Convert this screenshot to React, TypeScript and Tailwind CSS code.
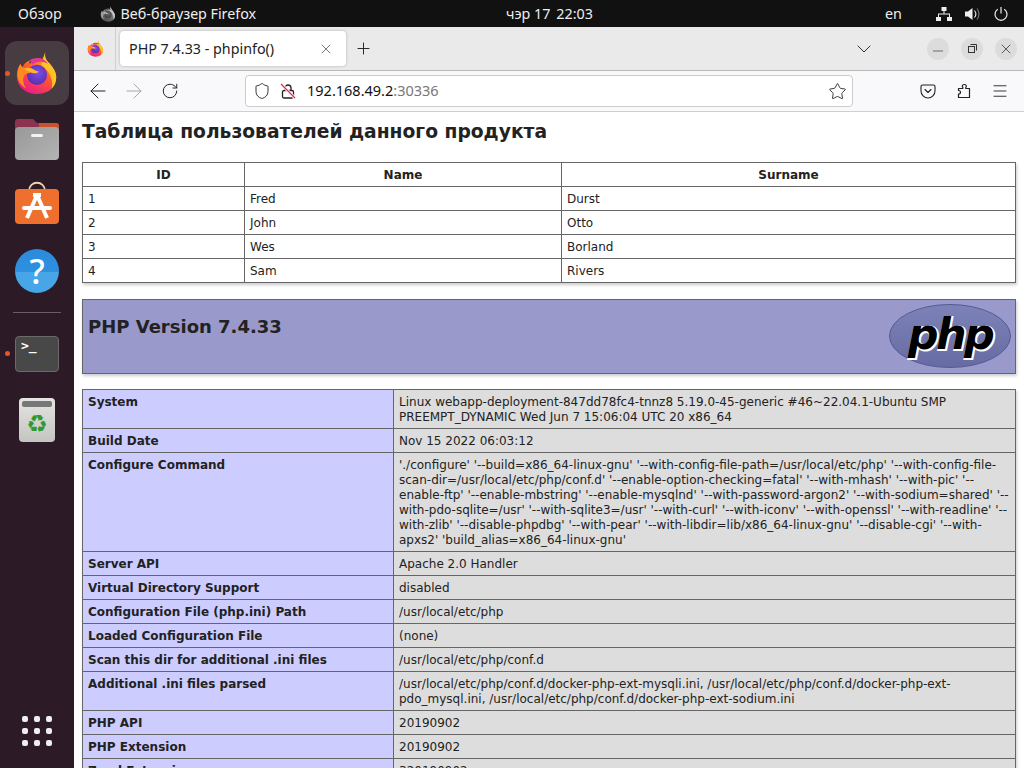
import React from "react";
import { ArrowLeft, ArrowRight, ChevronDown, Menu, Minus, Plus, RotateCw, Shield, Star, X } from "lucide-react";

const users = [
  ["1", "Fred", "Durst"],
  ["2", "John", "Otto"],
  ["3", "Wes", "Borland"],
  ["4", "Sam", "Rivers"],
];

const phpRows = [
  ["System", "Linux webapp-deployment-847dd78fc4-tnnz8 5.19.0-45-generic #46~22.04.1-Ubuntu SMP PREEMPT_DYNAMIC Wed Jun 7 15:06:04 UTC 20 x86_64"],
  ["Build Date", "Nov 15 2022 06:03:12"],
  ["Configure Command", "'./configure' '--build=x86_64-linux-gnu' '--with-config-file-path=/usr/local/etc/php' '--with-config-file-scan-dir=/usr/local/etc/php/conf.d' '--enable-option-checking=fatal' '--with-mhash' '--with-pic' '--enable-ftp' '--enable-mbstring' '--enable-mysqlnd' '--with-password-argon2' '--with-sodium=shared' '--with-pdo-sqlite=/usr' '--with-sqlite3=/usr' '--with-curl' '--with-iconv' '--with-openssl' '--with-readline' '--with-zlib' '--disable-phpdbg' '--with-pear' '--with-libdir=lib/x86_64-linux-gnu' '--disable-cgi' '--with-apxs2' 'build_alias=x86_64-linux-gnu'"],
  ["Server API", "Apache 2.0 Handler"],
  ["Virtual Directory Support", "disabled"],
  ["Configuration File (php.ini) Path", "/usr/local/etc/php"],
  ["Loaded Configuration File", "(none)"],
  ["Scan this dir for additional .ini files", "/usr/local/etc/php/conf.d"],
  ["Additional .ini files parsed", "/usr/local/etc/php/conf.d/docker-php-ext-mysqli.ini, /usr/local/etc/php/conf.d/docker-php-ext-pdo_mysql.ini, /usr/local/etc/php/conf.d/docker-php-ext-sodium.ini"],
  ["PHP API", "20190902"],
  ["PHP Extension", "20190902"],
  ["Zend Extension", "320190902"],
];

function FirefoxLogo({ size }: { size: number }) {
  return (
    <svg width={size} height={size} viewBox="0 0 48 48">
      <defs>
        <linearGradient id="ffBody" x1="0.75" y1="0.05" x2="0.25" y2="1">
          <stop offset="0" stopColor="#ffb31f" />
          <stop offset="0.45" stopColor="#ff5a2c" />
          <stop offset="1" stopColor="#e8188c" />
        </linearGradient>
        <radialGradient id="ffGlobe" cx="0.55" cy="0.4" r="0.65">
          <stop offset="0" stopColor="#7b50e0" />
          <stop offset="1" stopColor="#5a2ab0" />
        </radialGradient>
      </defs>
      <path d="M33 1c-1 6 1 9 5 13 4 5 7 9 7 15 0 11-9 18-21 18C12 47 2 39 2 27c0-6 2-10 4-13 0 3 1 4 2 5 1-5 5-8 9-9-1 1-2 3-1 4 3-3 8-4 12-3 3-3 4-7 5-10z" fill="url(#ffBody)" />
      <path d="M33 1c-1 6 1 9 5 13 4 5 7 9 7 15 0 5-2 9-5 12 1-4 1-9-2-15-2-5-6-8-10-11 3-3 4-10 5-14z" fill="#ffc327" />
      <circle cx="24" cy="26" r="11" fill="url(#ffGlobe)" />
      <path d="M6 14c-3 5-4 10-3 15 1 6 5 9 9 12-3-5-4-10-2-14 2-3 6-3 8-3-2-1-5-3-6-5-2 0-5-1-6-5z" fill="#ff8a1f" />
      <path d="M10 19c3-1 7-1 10 1 2 1 4 3 6 2-1 2-4 3-7 2-3-1-6-2-9-5z" fill="#ffb52e" />
      <path d="M16 10c3-2 8-3 12-2 3 1 6 3 8 6-3-2-7-3-10-2-3 0-5 1-7 3-1-2-2-4-3-5z" fill="#e0389b" />
    </svg>
  );
}

function NetworkIcon() {
  return (
    <svg width="16" height="14" viewBox="0 0 16 14" fill="#eeeeee">
      <rect x="5.500" y="0" width="5" height="4" />
      <rect x="0" y="10" width="5" height="4" />
      <rect x="11" y="10" width="5" height="4" />
      <path d="M7.500 4h1v2.500h5.500V10h-1V7.500H3V10H2V6.500h5.500z" />
    </svg>
  );
}

function VolumeIcon() {
  return (
    <svg width="16" height="14" viewBox="0 0 16 14" fill="none">
      <path d="M0 4.500h3L7.500 1v12L3 9.500H0z" fill="#eeeeee" />
      <path d="M9.500 3.500c1.600 2 1.600 5 0 7" stroke="#eeeeee" strokeWidth="1.100" />
      <path d="M12 1.500c2.600 3.200 2.600 7.800 0 11" stroke="#777777" strokeWidth="1.100" />
    </svg>
  );
}

function PowerIcon() {
  return (
    <svg width="14" height="14" viewBox="0 0 14 14" fill="none" stroke="#eeeeee" strokeWidth="1.200">
      <path d="M7 0v6.500" />
      <path d="M3.800 2.200a6 6 0 1 0 6.400 0" />
    </svg>
  );
}

function BrokenLock() {
  return (
    <svg width="16" height="16" viewBox="0 0 16 16" fill="none">
      <rect x="2.500" y="7.500" width="11" height="7.500" rx="1.500" stroke="#222" strokeWidth="1.300" />
      <path d="M5 7.500V5a3 3 0 0 1 6 0v2.500" stroke="#222" strokeWidth="1.300" />
      <path d="M1 1l14 14" stroke="#ffffff" strokeWidth="3" />
      <path d="M1 1l14 14" stroke="#e22850" strokeWidth="1.300" />
    </svg>
  );
}

function PocketIcon() {
  return (
    <svg width="16" height="16" viewBox="0 0 16 16" fill="none" stroke="#222" strokeWidth="1.100">
      <path d="M2.500 2h11A1.500 1.500 0 0 1 15 3.500V8a7 7 0 0 1-14 0V3.500A1.500 1.500 0 0 1 2.500 2z" />
      <path d="M5 6.500l3 3 3-3" strokeLinecap="round" strokeLinejoin="round" />
    </svg>
  );
}

function PuzzleIcon() {
  return (
    <svg width="16" height="16" viewBox="0 0 16 16" fill="none" stroke="#222" strokeWidth="1.200" strokeLinejoin="round">
      <path d="M2.500 14.500H13.500V5.500H10.200c-.5 0-.7-.5-.4-1 .3-.4.5-.8.5-1.300 0-1-1-1.700-2-1.700S6.300 2.200 6.300 3.200c0 .5.2.9.5 1.300.3.5.1 1-.4 1H2.500V7.500c.9 0 2 .5 2 1.800s-1.100 1.800-2 1.800z" />
    </svg>
  );
}

function FilesIcon() {
  return (
    <svg width="44" height="42" viewBox="0 0 44 42">
      <defs>
        <linearGradient id="filesBody" x1="0" y1="0" x2="1" y2="1">
          <stop offset="0" stopColor="#989898" />
          <stop offset="1" stopColor="#b4b4b4" />
        </linearGradient>
      </defs>
      <path d="M0 3a3 3 0 0 1 3-3h15l4 4h19a3 3 0 0 1 3 3v14H0z" fill="#8c3350" />
      <path d="M24 4h17a3 3 0 0 1 3 3v6H24z" fill="#c8532f" />
      <rect x="0" y="8" width="44" height="33" rx="4" fill="url(#filesBody)" />
      <rect x="16" y="15" width="12" height="3" rx="1.500" fill="#f2f2f2" />
    </svg>
  );
}

function StoreIcon() {
  return (
    <svg width="44" height="44" viewBox="0 0 44 44" fill="none">
      <path d="M14 11c0-11 16-11 16 0" stroke="#f1d3a8" strokeWidth="1.800" />
      <rect x="0" y="9" width="44" height="35" rx="4" fill="#ef6f2f" />
      <path d="M22 15L12 38M22 15l10 23" stroke="#ffffff" strokeWidth="4" />
      <path d="M9 28h26" stroke="#ffffff" strokeWidth="4" strokeLinecap="round" />
      <path d="M18 15h8" stroke="#ffffff" strokeWidth="4" />
    </svg>
  );
}

function HelpIcon() {
  return (
    <div className="flex h-[44px] w-[44px] items-center justify-center rounded-full bg-[linear-gradient(#2a8bdc_0%,#2f8fdf_52%,#47a6e8_52%,#47a6e8_100%)] font-['Noto_Sans',sans-serif] text-[34px] font-medium leading-none text-white">
      ?
    </div>
  );
}

function TerminalIcon() {
  return (
    <div className="h-[36px] w-[44px] rounded-[4px] border border-[#6a6a6a] bg-[#484848] pl-[5px] pt-[1px] font-['DejaVu_Sans_Mono',monospace] text-[13px] font-bold leading-[15px] text-white">
      &gt;_
    </div>
  );
}

function TrashIcon() {
  return (
    <div className="flex h-[44px] w-[36px] flex-col items-center rounded-[4px] bg-gradient-to-b from-[#e4e4e0] to-[#c4c4c0] px-[3px] pt-[3px]">
      <div className="h-[6px] w-full rounded-[2px] bg-[#777777]" />
      <div className="mt-[2px] text-[24px] leading-[30px] text-[#2f9a2f] font-['DejaVu_Sans',sans-serif]">♻</div>
    </div>
  );
}

function Dock() {
  return (
    <aside className="flex h-full w-[74px] shrink-0 flex-col items-center bg-[#2c1a26] pt-[14px]">
      <div className="relative flex h-[64px] w-[64px] items-center justify-center rounded-xl bg-[#463c42]">
        <FirefoxLogo size={44} />
        <span className="absolute left-0 top-[30px] h-[5px] w-[5px] rounded-full bg-[#e95420]" />
      </div>
      <div className="mt-[14px]"><FilesIcon /></div>
      <div className="mt-[19px]"><StoreIcon /></div>
      <div className="mt-[25px]"><HelpIcon /></div>
      <div className="mt-[19px] h-px w-[48px] bg-[#6d5a66]" />
      <div className="relative mt-[23px]">
        <TerminalIcon />
        <span className="absolute left-[-10px] top-[15px] h-[5px] w-[5px] rounded-full bg-[#e95420]" />
      </div>
      <div className="mt-[26px]"><TrashIcon /></div>
      <div className="mt-auto mb-[22px] grid grid-cols-3 gap-x-[6px] gap-y-[6px]">
        {Array.from({ length: 9 }).map((_, i) => (
          <span key={i} className="h-[6px] w-[6px] rounded-[2px] bg-[#eeeeee]" />
        ))}
      </div>
    </aside>
  );
}

function TopBar() {
  return (
    <header className="flex h-[27px] shrink-0 items-center bg-[#111111] font-['Noto_Sans',sans-serif] text-[14.300px] text-[#eeeeee]">
      <span className="ml-[18px]">Обзор</span>
      <span className="ml-[38px] grayscale"><FirefoxLogo size={16} /></span>
      <span className="ml-[5px]">Веб-браузер Firefox</span>
      <span className="ml-[250px]">чэр 17</span>
      <span className="ml-[6px]">22:03</span>
      <span className="ml-[292px]">en</span>
      <span className="ml-[34px]"><NetworkIcon /></span>
      <span className="ml-[13px]"><VolumeIcon /></span>
      <span className="ml-[13px]"><PowerIcon /></span>
    </header>
  );
}

function TabBar() {
  return (
    <div className="flex h-[44px] shrink-0 items-center border-b border-[#b8b8b8] bg-[#eaeaea] font-['Noto_Sans',sans-serif]">
      <div className="flex h-full w-[42px] items-center justify-center border-r border-[#cfcfcf] pl-[1px]">
        <FirefoxLogo size={17} />
      </div>
      <div className="ml-[4px] flex h-[35px] w-[226px] items-center justify-between rounded-[4px] bg-white pl-[9px] pr-[12px] text-[14.300px] text-[#222222] shadow-[0_0_3px_rgba(0,0,0,0.25)]">
        <span>PHP 7.4.33 - phpinfo()</span>
        <X size={16} strokeWidth={1.100} color="#444444" />
      </div>
      <Plus size={19} strokeWidth={1.200} color="#222222" className="ml-[8px]" />
      <ChevronDown size={24} strokeWidth={1} color="#333333" className="ml-[479px]" />
      <div className="ml-[51px] flex items-center gap-[12px]">
        <span className="flex h-[22px] w-[22px] items-center justify-center rounded-full bg-[#dcdcdc]">
          <Minus size={16} strokeWidth={1} color="#333333" className="mt-[4px]" />
        </span>
        <span className="flex h-[22px] w-[22px] items-center justify-center rounded-full bg-[#dcdcdc]">
          <svg width="9" height="9" viewBox="0 0 9 9" fill="none" stroke="#333333">
            <rect x="0.500" y="2.500" width="6" height="6" />
            <path d="M2.500 0.500h6v6" />
          </svg>
        </span>
        <span className="flex h-[22px] w-[22px] items-center justify-center rounded-full bg-[#dcdcdc]">
          <X size={16} strokeWidth={1.200} color="#333333" />
        </span>
      </div>
    </div>
  );
}

function Toolbar() {
  return (
    <div className="flex h-[41px] shrink-0 items-center border-b border-[#cfcfcf] bg-[#f9f9fb] pl-[12px] font-['Noto_Sans',sans-serif]">
      <ArrowLeft size={24} strokeWidth={1} color="#222222" />
      <ArrowRight size={24} strokeWidth={1} color="#a8a8a8" className="ml-[12px]" />
      <RotateCw size={18} strokeWidth={1.300} color="#222222" className="ml-[15px]" />
      <div className="ml-[66px] flex h-[32px] w-[608px] items-center rounded-[4px] border border-[#cccccc] bg-white pl-[7px] pr-[5px]">
        <Shield size={18} strokeWidth={1.200} color="#222222" />
        <span className="ml-[9px]"><BrokenLock /></span>
        <span className="ml-[11px] text-[14.500px] text-[#111111]">
          192.168.49.2<span className="text-[#777777]">:30336</span>
        </span>
        <Star size={19} strokeWidth={1.100} color="#222222" className="ml-auto" />
      </div>
      <span className="ml-[67px]"><PocketIcon /></span>
      <span className="ml-[20px]"><PuzzleIcon /></span>
      <Menu size={18} strokeWidth={1.200} color="#222222" className="ml-[19px]" />
    </div>
  );
}

function PhpLogo() {
  return (
    <svg width="122" height="64" viewBox="0 0 122 64">
      <defs>
        <linearGradient id="phpOval" x1="0" y1="0" x2="0" y2="1">
          <stop offset="0" stopColor="#7d82b8" />
          <stop offset="1" stopColor="#666ba3" />
        </linearGradient>
      </defs>
      <ellipse cx="61" cy="32" rx="60.500" ry="31.500" fill="url(#phpOval)" stroke="#555a92" strokeWidth="1" />
      <text x="62" y="46" textAnchor="middle" fontFamily="DejaVu Sans, sans-serif" fontSize="43" fontWeight="700" fontStyle="italic" fill="#ffffff" stroke="#ffffff" strokeWidth="2.200" letterSpacing="-2.500">php</text>
      <text x="61" y="45" textAnchor="middle" fontFamily="DejaVu Sans, sans-serif" fontSize="43" fontWeight="700" fontStyle="italic" fill="#000000" letterSpacing="-2.500">php</text>
    </svg>
  );
}

function PageContent() {
  const cell = "border border-[#666666] px-[5px] pt-[5px] pb-[3px] text-[12px] leading-[15px] text-[#222222] align-baseline break-words";
  return (
    <main className="min-w-0 flex-1 overflow-hidden bg-white px-[8px] font-['DejaVu_Sans',sans-serif] text-[#222222]">
      <h1 className="mt-[9px] h-[41px] text-[18.700px] font-bold leading-[22px]">Таблица пользователей данного продукта</h1>

      <table className="w-[933px] table-fixed border-collapse shadow-[1px_2px_3px_#cccccc]">
        <colgroup>
          <col className="w-[162px]" />
          <col className="w-[317px]" />
          <col className="w-[454px]" />
        </colgroup>
        <thead>
          <tr>
            <th className={cell + " text-center font-bold"}>ID</th>
            <th className={cell + " text-center font-bold"}>Name</th>
            <th className={cell + " text-center font-bold"}>Surname</th>
          </tr>
        </thead>
        <tbody>
          {users.map((u) => (
            <tr key={u[0]}>
              {u.map((v) => (
                <td key={v} className={cell}>{v}</td>
              ))}
            </tr>
          ))}
        </tbody>
      </table>

      <div className="mt-[16px] flex h-[75px] w-[934px] justify-between border border-[#666666] bg-[#9999cc] pl-[5px] pr-[4px] pt-[4px] shadow-[1px_2px_3px_#cccccc]">
        <h2 className="pt-[12px] text-[18px] font-bold leading-[21px]">PHP Version 7.4.33</h2>
        <PhpLogo />
      </div>

      <table className="mt-[15px] w-[933px] table-fixed border-collapse shadow-[1px_2px_3px_#cccccc]">
        <colgroup>
          <col className="w-[311px]" />
          <col className="w-[622px]" />
        </colgroup>
        <tbody>
          {phpRows.map(([k, v]) => (
            <tr key={k}>
              <td className={cell + " bg-[#ccccff] font-bold"}>{k}</td>
              <td className={cell + " bg-[#dddddd]"}>{v}</td>
            </tr>
          ))}
        </tbody>
      </table>
    </main>
  );
}

export default function App() {
  return (
    <div className="flex h-[768px] w-[1024px] flex-col overflow-hidden">
      <TopBar />
      <div className="flex min-h-0 flex-1">
        <Dock />
        <div className="flex min-w-0 flex-1 flex-col">
          <TabBar />
          <Toolbar />
          <PageContent />
        </div>
      </div>
    </div>
  );
}
